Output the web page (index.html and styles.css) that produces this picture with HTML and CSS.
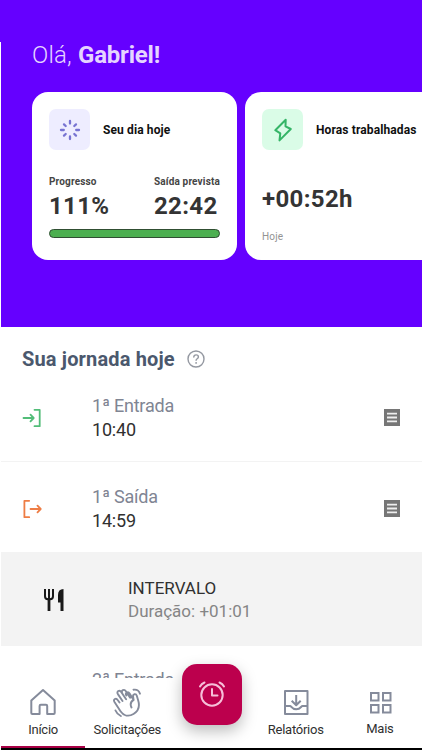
FILE: index.html
```html
<!DOCTYPE html>
<html lang="pt-BR">
<head>
<meta charset="utf-8">
<title>Início</title>
<link rel="stylesheet" href="styles.css">
</head>
<body>
<div class="app">
  <header class="hero">
    <h1 class="greeting"><span>Olá, </span><b>Gabriel!</b></h1>
    <div class="cards">
      <section class="card">
        <div class="card-head">
          <div class="badge badge-day">
            <svg width="22" height="22" viewBox="0 0 22 22" fill="none" stroke="#7773d2" stroke-width="2.3" stroke-linecap="round"><path d="M11 2v2.6M11 17.4V20M2 11h2.8M17.2 11H20M5 5.4l1.7 1.6M15.3 15l1.7 1.6M5 16.6L6.7 15M15.3 7L17 5.4"/></svg>
          </div>
          <h2>Seu dia hoje</h2>
        </div>
        <div class="stats">
          <div><p class="label">Progresso</p><p class="value">111%</p></div>
          <div class="exit"><p class="label">Saída prevista</p><p class="value">22:42</p></div>
        </div>
        <div class="bar"></div>
      </section>
      <section class="card">
        <div class="card-head">
          <div class="badge badge-hours">
            <svg width="20" height="24" viewBox="0 0 20 24" fill="none" stroke="#35b567" stroke-width="2" stroke-linejoin="round"><path d="M12.7 1.8L2.3 12.2l5 3.200-.8 7L17.800 11l-5.300-2.600z"/></svg>
          </div>
          <h2>Horas trabalhadas</h2>
        </div>
        <p class="value hours">+00:52h</p>
        <p class="today">Hoje</p>
      </section>
    </div>
  </header>
  <main class="journey">
    <div class="title">
      <h2>Sua jornada hoje</h2>
      <svg width="18" height="18" viewBox="0 0 18 18" fill="none" stroke="#9498a1" stroke-width="1.4" stroke-linecap="round"><circle cx="9" cy="9" r="8"/><path d="M6.8 7.1c0-3 4.6-2.8 4.6-.2 0 1.8-2.3 1.8-2.3 3.4"/><path d="M9.1 12.8v.1" stroke-width="1.8"/></svg>
    </div>
    <div class="row">
      <svg class="dir" width="20" height="20" viewBox="0 0 20 20" fill="none" stroke="#52bd78" stroke-width="1.8" stroke-linecap="round" stroke-linejoin="round"><path d="M12.500 1.800h5.200v16.400h-5.200M1.500 10h10M8.500 6.700l3.200 3.300-3.200 3.300"/></svg>
      <div class="entry"><p class="name">1ª Entrada</p><p class="time">10:40</p></div>
      <svg class="receipt" width="16" height="17" viewBox="0 0 16 17"><path fill="#767676" d="M0 0h16v17H0z"/><path stroke="#eee" stroke-width="1.8" d="M3 4.600h10M3 8.500h10M3 12.400h10"/></svg>
    </div>
    <div class="row">
      <svg class="dir" width="20" height="20" viewBox="0 0 20 20" fill="none" stroke="#ee7d45" stroke-width="1.800" stroke-linecap="round" stroke-linejoin="round"><path d="M7.200 1.800H2.400v16.400h4.800M8.500 10h10M15.500 6.700l3.200 3.300-3.200 3.300"/></svg>
      <div class="entry"><p class="name">1ª Saída</p><p class="time">14:59</p></div>
      <svg class="receipt" width="16" height="17" viewBox="0 0 16 17"><path fill="#767676" d="M0 0h16v17H0z"/><path stroke="#eee" stroke-width="1.8" d="M3 4.600h10M3 8.500h10M3 12.400h10"/></svg>
    </div>
    <div class="row break">
      <svg class="meal" width="22" height="24" viewBox="0 0 22 24" fill="none" stroke="#191919"><path stroke-width="2" d="M2 1v7.200q0 3 3 3h2q3 0 3-3V1M6 1v10"/><path stroke-width="2.800" d="M6 10v13"/><path fill="#191919" stroke="none" d="M20.500 1v22h-3v-8.500h-2.500V7q0-6 5.500-6z"/></svg>
      <div class="entry"><p>INTERVALO</p><p class="muted">Duração: +01:01</p></div>
    </div>
    <div class="row next">
      <div class="entry"><p class="name">2ª Entrada</p></div>
    </div>
  </main>
  <nav class="nav">
    <a class="tab active">
      <svg width="28" height="30" viewBox="0 0 28 30" fill="none" stroke="#858b9b" stroke-width="2" stroke-linejoin="round"><path d="M2.300 12.500L14 2 25.700 12.500v12.500q0 1-1 1H18.200v-8q0-1.200-1.200-1.200h-5.200q-1.200 0-1.200 1.200v8H3.300q-1 0-1-1z"/></svg>
      <span>Início</span>
    </a>
    <a class="tab">
      <svg width="30" height="30" viewBox="0 0 30 30" fill="none" stroke="#858b9b" stroke-width="1.900" stroke-linecap="round" stroke-linejoin="round"><path d="M7.500 14.500L5.700 12C4 9.400.9 11.300 2.500 14l6 9.200c3.200 4.700 8.200 5.700 13 2.800 6.300-3.900 6-9.200 4.700-13.500L24.800 7.800c-.8-2.700-4.200-1.800-3.700.8l.5 3.300-4-6.500c-1.600-2.500-4.800-.6-3.300 2M10.500 13L5.900 6.100C4.200 3.400 7.500 1.400 9.200 4l4.900 7.300M10.300 5.400C8.700 2.400 12.200.6 13.900 3.200l4.200 6.500M21.600 11.900c-3.200 1.900-3.700 4.300-2.100 7.600M21.500 1.700c3.200-.5 5.500.9 6.500 4M3.500 22.500c1 2.500 2.700 4.300 5.300 5.500"/></svg>
      <span>Solicitações</span>
    </a>
    <div class="tab clock">
      <a class="fab">
        <svg width="30" height="28" viewBox="0 0 30 28" fill="none" stroke="#f6bfd9" stroke-width="2" stroke-linecap="round" stroke-linejoin="round"><circle cx="15" cy="15" r="10.700"/><path d="M15 9v6.500h5.500M3 6.500Q4.500 3.800 7.500 2.500M22.500 2.500q3 1.300 4.500 4"/></svg>
      </a>
    </div>
    <a class="tab">
      <svg width="28" height="30" viewBox="0 0 28 30" fill="none" stroke="#858b9b" stroke-width="2" stroke-linejoin="round"><path d="M3 3h22.500v23H3zM3 18h5c1.500 0 1.500 3.300 6.200 3.300s4.700-3.300 6.300-3.300h5M14.200 7v10M9.700 12.700l4.500 4.500 4.500-4.500"/></svg>
      <span>Relatórios</span>
    </a>
    <a class="tab">
      <svg width="28" height="30" viewBox="0 0 28 30" fill="none" stroke="#858b9b" stroke-width="2"><path d="M5 5h7.500v7.500H5zM17 5h7.500v7.500H17zM5 17h7.500v7.500H5zM17 17h7.500v7.500H17z"/></svg>
      <span class="mais">Mais</span>
    </a>
  </nav>
</div>
</body>
</html>
```
FILE: styles.css
```css
* { box-sizing: border-box; }
body, h1, h2, p { margin: 0; }
body { background: #fff; font-family: Roboto, sans-serif; color: #303030; }
.app { height: 750px; overflow: hidden; display: flex; flex-direction: column; border-top: 42px solid #6500ff; }
.hero { flex: none; height: 285px; margin-left: 1px; padding-left: 31px; background: #6500ff; overflow: hidden; }
.greeting { height: 50px; font-size: 24px; line-height: 26px; font-weight: 300; letter-spacing: -.07px; color: #e5d4ff; white-space: pre; }
.greeting span { letter-spacing: .2px; }
.greeting b { font-weight: 700; letter-spacing: -.2px; }
.cards { display: flex; gap: 8px; }
.card { flex: none; width: 205px; height: 168px; padding: 17px 17px; background: #fff; border-radius: 16px; }
.card-head { display: flex; align-items: center; gap: 13px; }
.card-head h2 { font-size: 12px; line-height: 16px; font-weight: 700; letter-spacing: .12px; color: #101010; white-space: nowrap; }
.badge { flex: none; display: flex; align-items: center; justify-content: center; width: 41px; height: 41px; border-radius: 7px; }
.badge-day { background: #eeedff; }
.badge-hours { background: #dafce7; }
.stats { display: flex; justify-content: space-between; margin-top: 26px; }
.label { font-size: 10px; line-height: 12px; font-weight: 700; letter-spacing: .16px; color: #454545; white-space: nowrap; }
.value { font-size: 24px; line-height: 28px; margin-top: 4px; font-weight: 700; letter-spacing: .35px; color: #343434; }
.bar { height: 9px; margin-top: 9px; border: 1px solid #304e32; border-radius: 5px; background: #4caf50; }
.hours { margin-top: 35px; }
.today { margin-top: 18px; font-size: 10px; line-height: 12px; letter-spacing: .2px; color: #939393; }
.journey { flex: none; height: 351px; overflow: hidden; margin-left: 1px; }
.title { display: flex; align-items: center; gap: 12px; height: 44px; padding: 19px 0 0 21px; }
.title h2 { font-size: 20px; line-height: 26px; font-weight: 700; letter-spacing: .15px; color: #4b586d; }
.row { display: flex; align-items: center; height: 91px; padding: 3px 22px 0 21px; border-bottom: 1px solid #f3f3f3; font-size: 18px; line-height: 24px; }
.dir { margin-right: 50px; }
.receipt { margin-left: auto; }
.name { color: #808593; letter-spacing: -.22px; }
.time { letter-spacing: -.2px; }
.break { height: 93px; background: #f3f3f3; padding: 2px 22px 0 42px; font-size: 17px; line-height: 23px; }
.meal { margin-right: 63px; }
.muted { color: #858585; }
.next { align-items: flex-start; padding: 22px 0 0 91px; }
.nav { flex: none; height: 72px; display: flex; margin-left: 1px; background: #fff; border-bottom: 2px solid #000; }
.tab { position: relative; flex: 1; display: flex; flex-direction: column; align-items: center; padding-top: 10px; font-size: 13px; line-height: 16px; letter-spacing: -.25px; color: #303030; border-bottom: 2px solid transparent; }
.tab span { margin-top: 4px; white-space: nowrap; }
.tab .mais { margin-top: 3px; }
.active { border-bottom-color: #a80045; }
.fab { position: absolute; left: 13px; top: -14px; width: 60px; height: 61px; padding-bottom: 2px; border-radius: 15px; background: #bc004d; display: flex; align-items: center; justify-content: center; box-shadow: 0 6px 15px #0004; }
```
